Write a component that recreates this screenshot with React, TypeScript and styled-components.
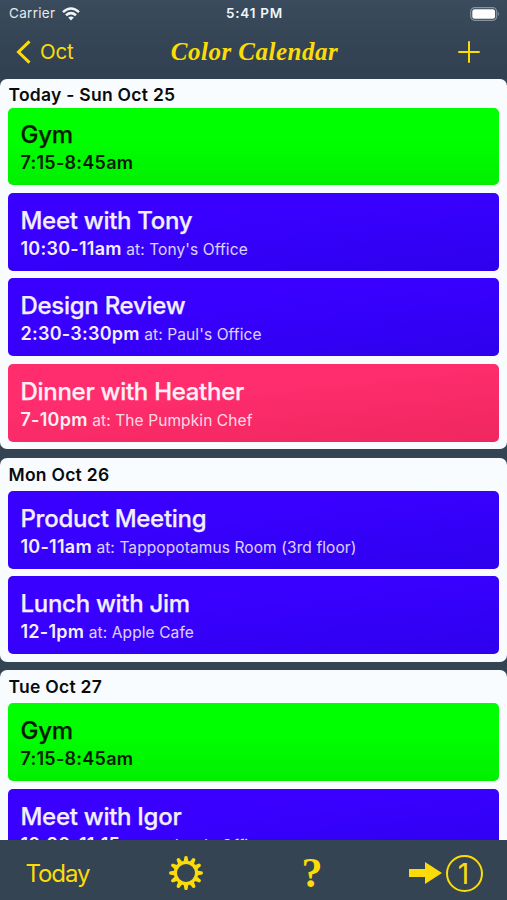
import React from 'react';
import styled, { createGlobalStyle } from 'styled-components';

const yellow = '#fcdc08';

const GlobalStyle = createGlobalStyle`
  * { box-sizing: border-box; }
  body {
    margin: 0;
    background: #344453;
    overflow: hidden;
    font-family: Inter, "Liberation Sans", sans-serif;
  }
`;

const Screen = styled.div`
  display: flex;
  flex-direction: column;
  width: 507px;
  height: 900px;
  overflow: hidden;
  background: #344453;
`;

const Header = styled.header`
  flex: none;
  height: 79px;
  background: linear-gradient(#3a4b5d, #344454 60%, #314051);
`;

const StatusBar = styled.div`
  display: grid;
  grid-template-columns: 1fr auto 1fr;
  align-items: center;
  height: 27px;
  padding: 0 7px 0 9px;
  font-size: 13.5px;
  line-height: 27px;
  color: #e4eaf0;
`;

const Carrier = styled.div`
  display: flex;
  align-items: center;
  gap: 7px;
  letter-spacing: 0.3px;
`;

const Clock = styled.div`
  font-weight: 600;
  letter-spacing: 0.75px;
  color: #f1f5f9;
`;

const Battery = styled.svg`
  justify-self: end;
`;

const NavBar = styled.nav`
  display: grid;
  grid-template-columns: 1fr auto 1fr;
  align-items: center;
  height: 50px;
  padding: 0 27px 0 16px;
  color: ${yellow};
`;

const BackButton = styled.div`
  display: flex;
  align-items: center;
  gap: 9px;
  font-size: 20.5px;
  line-height: 24px;
  letter-spacing: -0.2px;
`;

const AppTitle = styled.h1`
  margin: 0 0 0 13px;
  font: italic 700 25px/30px "Liberation Serif", serif;
  letter-spacing: 0.5px;
`;

const AddIcon = styled.svg`
  justify-self: end;
`;

const Agenda = styled.main`
  flex: 1;
  min-height: 0;
  overflow: hidden;
  display: flex;
  flex-direction: column;
  gap: 8.5px;
`;

const Day = styled.section`
  flex: none;
  padding: 0 8px 7.5px;
  border-radius: 7px;
  background: #f8fcff;
`;

const DayLabel = styled.h2<{ $compact?: boolean }>`
  margin: 0;
  height: ${p => (p.$compact ? 29 : 33)}px;
  padding-left: 0.5px;
  font-size: 17.5px;
  font-weight: 600;
  line-height: ${p => (p.$compact ? 32 : 33)}px;
  letter-spacing: 0.26px;
  color: #090b0d;
`;

const Events = styled.div`
  display: flex;
  flex-direction: column;
  gap: 7.5px;
`;

const tones = {
  green: { background: 'linear-gradient(#00ff00 40%, #00f000)', color: '#001b00' },
  blue: { background: 'linear-gradient(174deg, #3900ff 35%, #2e00ed)', color: '#f4efff' },
  pink: { background: 'linear-gradient(174deg, #ff2d6d 35%, #ef275f)', color: '#fff0f5' },
};

type Tone = keyof typeof tones;

const EventCard = styled.article<{ $tone: Tone; $short?: boolean }>`
  height: ${p => (p.$short ? 77 : 78)}px;
  padding: ${p => (p.$short ? 12 : 13)}px 12.5px 0;
  border-radius: 5px;
  background: ${p => tones[p.$tone].background};
  color: ${p => tones[p.$tone].color};
  white-space: nowrap;
`;

const EventTitle = styled.h3`
  margin: 0;
  font-size: 24px;
  font-weight: 500;
  line-height: 30px;
  letter-spacing: -0.28px;
  -webkit-text-stroke: 0.25px currentColor;
`;

const EventMeta = styled.div`
  font-size: 18px;
  font-weight: 600;
  line-height: 26px;
  letter-spacing: 0.25px;
`;

const Place = styled.span`
  margin-left: 4.5px;
  font-size: 15.5px;
  font-weight: 400;
  letter-spacing: 0.1px;
  opacity: 0.88;
`;

const Toolbar = styled.footer`
  flex: none;
  display: grid;
  grid-template-columns: 120px 132px 120px 1fr;
  align-items: center;
  justify-items: center;
  height: 60px;
  padding: 6px 24px 0 0;
  background: #344453;
  color: ${yellow};
`;

const TodayButton = styled.div`
  justify-self: start;
  padding: 2px 0 0 25.5px;
  font-size: 24px;
  line-height: 32px;
  letter-spacing: -1.1px;
  white-space: nowrap;
`;

const HelpButton = styled.div`
  font: 700 42px/40px "Liberation Serif", serif;
`;

const JumpButton = styled.div`
  justify-self: end;
  display: flex;
  align-items: center;
  gap: 4px;
`;

const DayCount = styled.div`
  width: 37px;
  height: 37px;
  border: 2px solid ${yellow};
  border-radius: 50%;
  padding-right: 2px;
  text-align: center;
  font: 400 28px/34px Inter, sans-serif;
`;

type CalendarEvent = { title: string; time: string; place?: string; tone: Tone };

const days: { label: string; events: CalendarEvent[] }[] = [
  {
    label: 'Today - Sun Oct 25',
    events: [
      { title: 'Gym', time: '7:15-8:45am', tone: 'green' },
      { title: 'Meet with Tony', time: '10:30-11am', place: "Tony's Office", tone: 'blue' },
      { title: 'Design Review', time: '2:30-3:30pm', place: "Paul's Office", tone: 'blue' },
      { title: 'Dinner with Heather', time: '7-10pm', place: 'The Pumpkin Chef', tone: 'pink' },
    ],
  },
  {
    label: 'Mon Oct 26',
    events: [
      { title: 'Product Meeting', time: '10-11am', place: 'Tappopotamus Room (3rd floor)', tone: 'blue' },
      { title: 'Lunch with Jim', time: '12-1pm', place: 'Apple Cafe', tone: 'blue' },
    ],
  },
  {
    label: 'Tue Oct 27',
    events: [
      { title: 'Gym', time: '7:15-8:45am', tone: 'green' },
      { title: 'Meet with Igor', time: '10:30-11:15am', place: "Igor's Office", tone: 'blue' },
    ],
  },
];

const teeth = Array.from({ length: 12 }, (_, i) => i * 30);

const GearIcon = () => (
  <svg width="36" height="36" viewBox="-18 -18 36 36" fill={yellow}>
    <circle r="10.6" fill="none" stroke={yellow} strokeWidth="3.2" />
    {teeth.map(a => (
      <path key={a} d="M-2.5 -11L-1.5 -16.4Q0 -17.6 1.5 -16.4L2.5 -11Z" transform={`rotate(${a})`} />
    ))}
  </svg>
);

export default function App() {
  return (
    <Screen>
      <GlobalStyle />
      <Header>
        <StatusBar>
          <Carrier>
            Carrier
            <svg width="18" height="14" viewBox="0 0 18 14" fill="none" stroke="#f1f5f9" strokeWidth="2.5">
              <path d="M1 5.1Q9 -2 17 5.1" />
              <path d="M4 8.2Q9 4 14 8.2" />
              <path d="M6.2 10.6Q9 8.3 11.8 10.6L9 13.6Z" fill="#f1f5f9" stroke="none" />
            </svg>
          </Carrier>
          <Clock>5:41 PM</Clock>
          <Battery width="30" height="14" viewBox="0 0 30 14">
            <rect x="0.7" y="0.7" width="26" height="12.6" rx="4" fill="none" stroke="#8793a0" strokeWidth="1.2" />
            <rect x="2.3" y="2.3" width="22.8" height="9.4" rx="2.5" fill="#fff" />
            <path d="M28 4.8Q30 7 28 9.2Z" fill="#8793a0" />
          </Battery>
        </StatusBar>
        <NavBar>
          <BackButton>
            <svg width="15" height="24" viewBox="0 0 15 24" fill="none" stroke={yellow} strokeWidth="3">
              <path d="M13.5 1.3L2.5 12L13.5 22.7" />
            </svg>
            Oct
          </BackButton>
          <AppTitle>Color Calendar</AppTitle>
          <AddIcon width="22" height="22" viewBox="0 0 22 22" stroke={yellow} strokeWidth="2">
            <path d="M11 0.3V21.7M0.3 11H21.7" />
          </AddIcon>
        </NavBar>
      </Header>
      <Agenda>
        {days.map((day, d) => (
          <Day key={day.label}>
            <DayLabel $compact={d === 0}>{day.label}</DayLabel>
            <Events>
              {day.events.map((event, e) => (
                <EventCard key={event.title} $tone={event.tone} $short={d === 0 && e === 0}>
                  <EventTitle>{event.title}</EventTitle>
                  <EventMeta>
                    {event.time}
                    {event.place && <Place>at: {event.place}</Place>}
                  </EventMeta>
                </EventCard>
              ))}
            </Events>
          </Day>
        ))}
      </Agenda>
      <Toolbar>
        <TodayButton>Today</TodayButton>
        <GearIcon />
        <HelpButton>?</HelpButton>
        <JumpButton>
          <svg width="33" height="24" viewBox="0 0 33 24" fill={yellow}>
            <path d="M0 8H16V1L33 12L16 23V16H0Z" />
          </svg>
          <DayCount>1</DayCount>
        </JumpButton>
      </Toolbar>
    </Screen>
  );
}
